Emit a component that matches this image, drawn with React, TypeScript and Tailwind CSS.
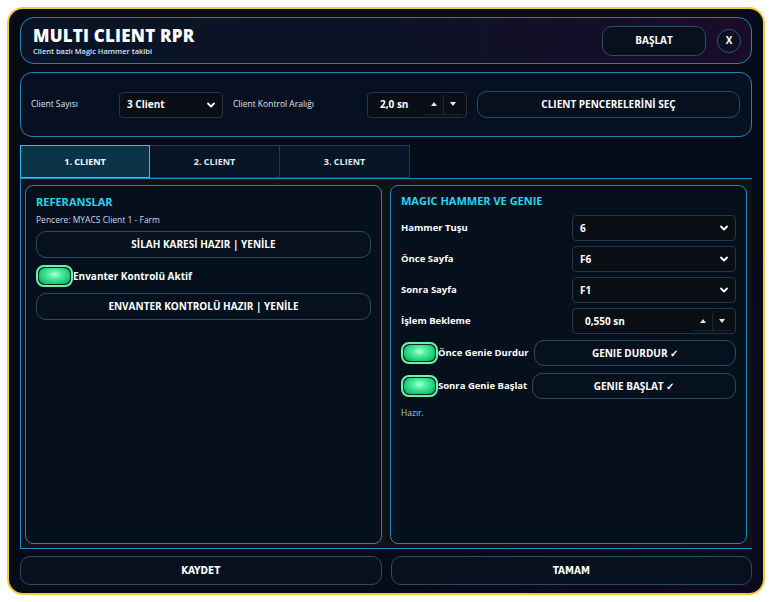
import React from "react";

const font = { fontFamily: '"Open Sans", "Noto Sans", sans-serif' };

function Chevron() {
  return (
    <svg width="10" height="10" viewBox="0 0 10 10" className="text-white">
      <path d="M2 3.5 L5 6.5 L8 3.5" stroke="currentColor" strokeWidth="1.8" fill="none" strokeLinecap="round" strokeLinejoin="round" />
    </svg>
  );
}

function Select({ value, className = "" }: { value: string; className?: string }) {
  return (
    <div className={`flex items-center justify-between rounded-[4px] border border-[#243649] bg-[#0a0f16] pl-[7px] pr-[6px] text-[10px] font-bold text-white ${className}`}>
      <span>{value}</span>
      <Chevron />
    </div>
  );
}

function Spin({ value, className = "" }: { value: string; className?: string }) {
  return (
    <div className={`flex items-center justify-between rounded-[4px] border border-[#243649] bg-[#0a0f16] pl-[12px] pr-[4px] text-[10px] font-bold text-white ${className}`}>
      <span>{value}</span>
      <div className="flex h-[20px] items-center">
        <div className="flex h-full w-[20px] items-center justify-center border-b border-r border-[#1a2633]">
          <svg width="6" height="4" viewBox="0 0 6 4"><path d="M0 4 L3 0 L6 4Z" fill="#e5e7eb" /></svg>
        </div>
        <div className="flex h-full w-[18px] items-center justify-center border-b border-[#1a2633]">
          <svg width="6" height="4" viewBox="0 0 6 4"><path d="M0 0 L3 4 L6 0Z" fill="#e5e7eb" /></svg>
        </div>
      </div>
    </div>
  );
}

function Btn({ children, className = "" }: { children: React.ReactNode; className?: string }) {
  return (
    <div className={`flex items-center justify-center rounded-[10px] border border-[#2b4b69] bg-[#07111e] text-[10px] font-bold text-white ${className}`}>
      {children}
    </div>
  );
}

function Toggle() {
  return (
    <div className="flex h-[22px] w-[37px] shrink-0 items-center justify-center rounded-[8px] border-2 border-[#6ff0ad] bg-[#0b2a1c] p-[1px]">
      <div
        className="h-full w-full rounded-[6px]"
        style={{ background: "radial-gradient(ellipse at 50% 40%, #b9ffe0 0%, #4ef0a0 30%, #1fc676 70%, #14a35e 100%)" }}
      />
    </div>
  );
}

export default function App() {
  return (
    <div className="h-[602px] w-[772px] bg-white p-[7px]" style={font}>
      <div
        className="flex h-[588px] w-[758px] flex-col rounded-[16px] border-2 border-[#f4c842] px-[11px] pt-[8px]"
        style={{ background: "linear-gradient(135deg, #050c18 0%, #050b17 70%, #0e0a1e 100%)" }}
      >
        {/* Header */}
        <div
          className="flex h-[47px] shrink-0 items-center justify-between rounded-[14px] border border-[#1f86b4] pl-[12px] pr-[10px]"
          style={{ background: "linear-gradient(90deg, #0a1426 0%, #0d1326 50%, #1b0b2b 100%)" }}
        >
          <div className="flex flex-col">
            <div className="text-[17px] font-extrabold leading-[20px] tracking-[0.2px] text-white">MULTI CLIENT RPR</div>
            <div className="text-[7.5px] font-semibold leading-[10px] text-[#cfe3f5]">Client bazlı Magic Hammer takibi</div>
          </div>
          <div className="flex items-center gap-[11px]">
            <Btn className="h-[30px] w-[104px] bg-[#0a0f22]">BAŞLAT</Btn>
            <div className="flex h-[24px] w-[24px] items-center justify-center rounded-full border border-[#3a536c] bg-[#0d0f22] text-[10px] font-bold text-white">
              X
            </div>
          </div>
        </div>

        {/* Settings */}
        <div className="mt-[8px] flex h-[65px] shrink-0 items-center rounded-[12px] border border-[#1f86b4] bg-[#061020] pl-[10px] pr-[11px]">
          <span className="w-[88px] text-[8.5px] text-[#dbe6f2]">Client Sayısı</span>
          <Select value="3 Client" className="h-[26px] w-[104px]" />
          <span className="ml-[10px] w-[134px] text-[8.5px] text-[#dbe6f2]">Client Kontrol Aralığı</span>
          <Spin value="2,0 sn" className="h-[26px] w-[100px]" />
          <Btn className="ml-[10px] h-[27px] flex-1">CLIENT PENCERELERİNİ SEÇ</Btn>
        </div>

        {/* Tabs */}
        <div className="mt-[8px] flex h-[33px] shrink-0">
          <div className="flex w-[130px] items-center justify-center border border-[#26c5ea] bg-[#0a3347] text-[9px] font-bold text-white">1. CLIENT</div>
          <div className="flex w-[130px] items-center justify-center border border-l-0 border-[#1d3c57] bg-[#081526] text-[9px] font-bold text-[#dfe8f2]">2. CLIENT</div>
          <div className="flex w-[130px] items-center justify-center border border-l-0 border-[#1d3c57] bg-[#081526] text-[9px] font-bold text-[#dfe8f2]">3. CLIENT</div>
        </div>

        {/* Pane */}
        <div className="flex h-[371px] shrink-0 gap-[8px] border-b border-l border-t border-[#1a8ccc] bg-[#101214] pb-[4px] pl-[4px] pr-[5px] pt-[6px]">
          {/* Left panel */}
          <div className="flex flex-1 flex-col rounded-[8px] border border-[#1b86c0] bg-[#06101c] px-[10px] pt-[8px]">
            <div className="text-[11px] font-bold leading-[16px] text-[#27d3f0]">REFERANSLAR</div>
            <div className="mt-[4px] text-[8.5px] leading-[12px] text-[#cbd6e2]">Pencere: MYACS Client 1 - Farm</div>
            <Btn className="mt-[5px] h-[27px]">SİLAH KARESİ HAZIR | YENİLE</Btn>
            <div className="mt-[7px] flex items-center">
              <Toggle />
              <span className="text-[10px] font-bold text-white">Envanter Kontrolü Aktif</span>
            </div>
            <Btn className="mt-[6px] h-[27px]">ENVANTER KONTROLÜ HAZIR | YENİLE</Btn>
          </div>
          {/* Right panel */}
          <div className="flex flex-1 flex-col rounded-[8px] border border-[#1b86c0] bg-[#06101c] pl-[10px] pr-[10px] pt-[7px]">
            <div className="mb-[1px] text-[11px] font-bold leading-[16px] text-[#27d3f0]">MAGIC HAMMER VE GENIE</div>
            {[
              ["Hammer Tuşu", "6"],
              ["Önce Sayfa", "F6"],
              ["Sonra Sayfa", "F1"],
            ].map(([l, v]) => (
              <div key={l} className="mt-[5px] flex h-[26px] items-center justify-between">
                <span className="text-[9.5px] font-bold text-white">{l}</span>
                <Select value={v} className="h-[26px] w-[164px]" />
              </div>
            ))}
            <div className="mt-[5px] flex h-[26px] items-center justify-between">
              <span className="text-[9.5px] font-bold text-white">İşlem Bekleme</span>
              <Spin value="0,550 sn" className="h-[26px] w-[164px]" />
            </div>
            <div className="mt-[6px] flex h-[26px] items-center">
              <Toggle />
              <span className="w-[96px] text-[9.5px] font-bold text-white">Önce Genie Durdur</span>
              <Btn className="h-[26px] flex-1">GENIE DURDUR ✓</Btn>
            </div>
            <div className="mt-[7px] flex h-[26px] items-center">
              <Toggle />
              <span className="w-[94px] text-[9.5px] font-bold text-white">Sonra Genie Başlat</span>
              <Btn className="h-[26px] flex-1">GENIE BAŞLAT ✓</Btn>
            </div>
            <div className="mt-[8px] text-[8.5px] text-[#b7c3d0]">Hazır.</div>
          </div>
        </div>

        {/* Bottom */}
        <div className="mt-[7px] flex h-[29px] shrink-0 gap-[9px]">
          <Btn className="flex-1">
            <span style={{ fontFamily: '"DejaVu Sans Condensed", "DejaVu Sans", sans-serif' }} className="text-[10px] font-bold">KAYDET</span>
          </Btn>
          <Btn className="flex-1">
            <span style={{ fontFamily: '"DejaVu Sans Condensed", "DejaVu Sans", sans-serif' }} className="text-[10px] font-bold">TAMAM</span>
          </Btn>
        </div>
      </div>
    </div>
  );
}
